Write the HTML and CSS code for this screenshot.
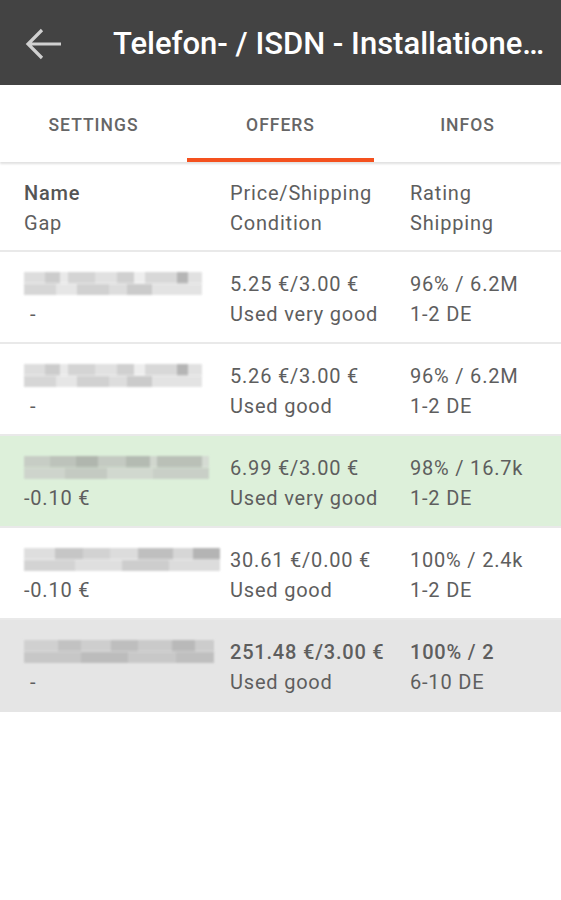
FILE: index.html
```html
<html>
  <head>
    <link rel="stylesheet" href="styles.css">
  </head>
  <body>
    <div class="toolbar">
      <svg class="back" width="40" height="34" viewBox="0 0 40 34">
        <path d="M37 17H4M18 3L4 17l14 14" fill="none" stroke="#d0d0d0" stroke-width="3.2"/>
      </svg>
      <div class="title">Telefon- / ISDN - Installatione…</div>
    </div>
    <div class="tabs">
      <div class="tab">SETTINGS</div>
      <div class="tab active">OFFERS</div>
      <div class="tab">INFOS</div>
    </div>
    <div class="list">
      <div class="row head">
        <div class="c1"><b>Name</b><br>Gap</div>
        <div class="c2">Price/Shipping<br>Condition</div>
        <div class="c3">Rating<br>Shipping</div>
      </div>
      <div class="row">
        <div class="c1"><div class="blur b1"></div><span class="dash">-</span></div>
        <div class="c2">5.25 €/3.00 €<br>Used very good</div>
        <div class="c3">96% / 6.2M<br>1-2 DE</div>
      </div>
      <div class="row">
        <div class="c1"><div class="blur b1"></div><span class="dash">-</span></div>
        <div class="c2">5.26 €/3.00 €<br>Used good</div>
        <div class="c3">96% / 6.2M<br>1-2 DE</div>
      </div>
      <div class="row green">
        <div class="c1"><div class="blur b2"></div>-0.10 €</div>
        <div class="c2">6.99 €/3.00 €<br>Used very good</div>
        <div class="c3">98% / 16.7k<br>1-2 DE</div>
      </div>
      <div class="row">
        <div class="c1"><div class="blur b3"></div>-0.10 €</div>
        <div class="c2">30.61 €/0.00 €<br>Used good</div>
        <div class="c3">100% / 2.4k<br>1-2 DE</div>
      </div>
      <div class="row grey">
        <div class="c1"><div class="blur b4"></div><span class="dash">-</span></div>
        <div class="c2"><b>251.48 €/3.00 €</b><br>Used good</div>
        <div class="c3"><b>100% / 2</b><br>6-10 DE</div>
      </div>
    </div>
  </body>
</html>
```

FILE: styles.css
```css
*{
  margin: 0px;
  padding: 0px;
  box-sizing: border-box;
}
body{
  background: #fff;
  font-family: Roboto, "Liberation Sans", sans-serif;
  color: #5e5e5e;
}
.toolbar{
  height: 85px;
  background: #434343;
  display: flex;
  align-items: center;
  padding-left: 24px;
}
.back{
  margin-top: 2px;
}
.title{
  margin-left: 49px;
  color: #fff;
  font-size: 31px;
  font-weight: 500;
  white-space: nowrap;
  margin-top: 2px;
}
.tabs{
  display: flex;
  height: 77px;
  background: #fff;
  box-shadow: 0 2px 2px rgba(0,0,0,0.12);
}
.tab{
  width: 187px;
  display: flex;
  align-items: center;
  justify-content: center;
  font-size: 17.5px;
  font-weight: 500;
  color: #666;
  letter-spacing: 1px;
  padding-top: 2px;
}
.tab.active{
  border-bottom: 4px solid #f4511e;
  padding-top: 6px;
}
.list{
  margin-top: 2px;
}
.row{
  display: flex;
  height: 92px;
  padding: 17px 0 0 24px;
  border-bottom: 2px solid #e9e9e9;
  font-size: 20px;
  line-height: 30px;
  letter-spacing: 0.8px;
}
.row.head{
  height: 88px;
  padding-top: 14px;
}
.row.green{
  background: #ddf0da;
}
.row.grey{
  background: #e5e5e5;
  border-bottom: none;
}
.c1{
  width: 206px;
}
.c2{
  width: 180px;
  white-space: nowrap;
}
.c3{
  flex: 1;
}
b{
  font-weight: 500;
}
.head b{
  color: #555;
}
.dash{
  padding-left: 6px;
}
.blur{
  height: 23px;
  margin: 3px 0 4px 0;
  filter: blur(1.2px);
  opacity: 0.85;
}
.b1{
  width: 178px;
  background:
    linear-gradient(90deg, #d8d8d8 0 12%, #c4c4c4 12% 20%, #e6e6e6 20% 25%, #cdcdcd 25% 40%, #dcdcdc 40% 52%, #c8c8c8 52% 62%, #ececec 62% 68%, #d2d2d2 68% 86%, #a9a9a9 86% 92%, #dcdcdc 92%) top/100% 50% no-repeat,
    linear-gradient(90deg, #cfcfcf 0 18%, #e2e2e2 18% 30%, #c9c9c9 30% 48%, #d8d8d8 48% 58%, #c2c2c2 58% 72%, #dfdfdf 72% 100%) bottom/100% 50% no-repeat;
}
.b2{
  width: 185px;
  background:
    linear-gradient(90deg, #c4c8c2 0 14%, #b8bcb6 14% 28%, #a9ada7 28% 40%, #c0c4be 40% 55%, #aeb2ac 55% 68%, #cfd3cd 68% 72%, #b4b8b2 72% 96%, #d4d8d2 96%) top/100% 50% no-repeat,
    linear-gradient(90deg, #ccd0ca 0 22%, #c0c4be 22% 45%, #d0d4ce 45% 70%, #c6cac4 70% 100%) bottom/100% 50% no-repeat;
}
.b3{
  width: 196px;
  background:
    linear-gradient(90deg, #d9d9d9 0 16%, #bdbdbd 16% 30%, #cbcbcb 30% 44%, #d6d6d6 44% 58%, #b5b5b5 58% 76%, #cfcfcf 76% 86%, #a8a8a8 86%) top/100% 50% no-repeat,
    linear-gradient(90deg, #cccccc 0 26%, #dadada 26% 50%, #c5c5c5 50% 74%, #d6d6d6 74% 100%) bottom/100% 50% no-repeat;
}
.b4{
  width: 190px;
  background:
    linear-gradient(90deg, #cdcdcd 0 18%, #bdbdbd 18% 30%, #cacaca 30% 46%, #b8b8b8 46% 60%, #c6c6c6 60% 78%, #b2b2b2 78% 90%, #c8c8c8 90%) top/100% 50% no-repeat,
    linear-gradient(90deg, #c2c2c2 0 30%, #b6b6b6 30% 55%, #c4c4c4 55% 80%, #b9b9b9 80% 100%) bottom/100% 50% no-repeat;
}
```
